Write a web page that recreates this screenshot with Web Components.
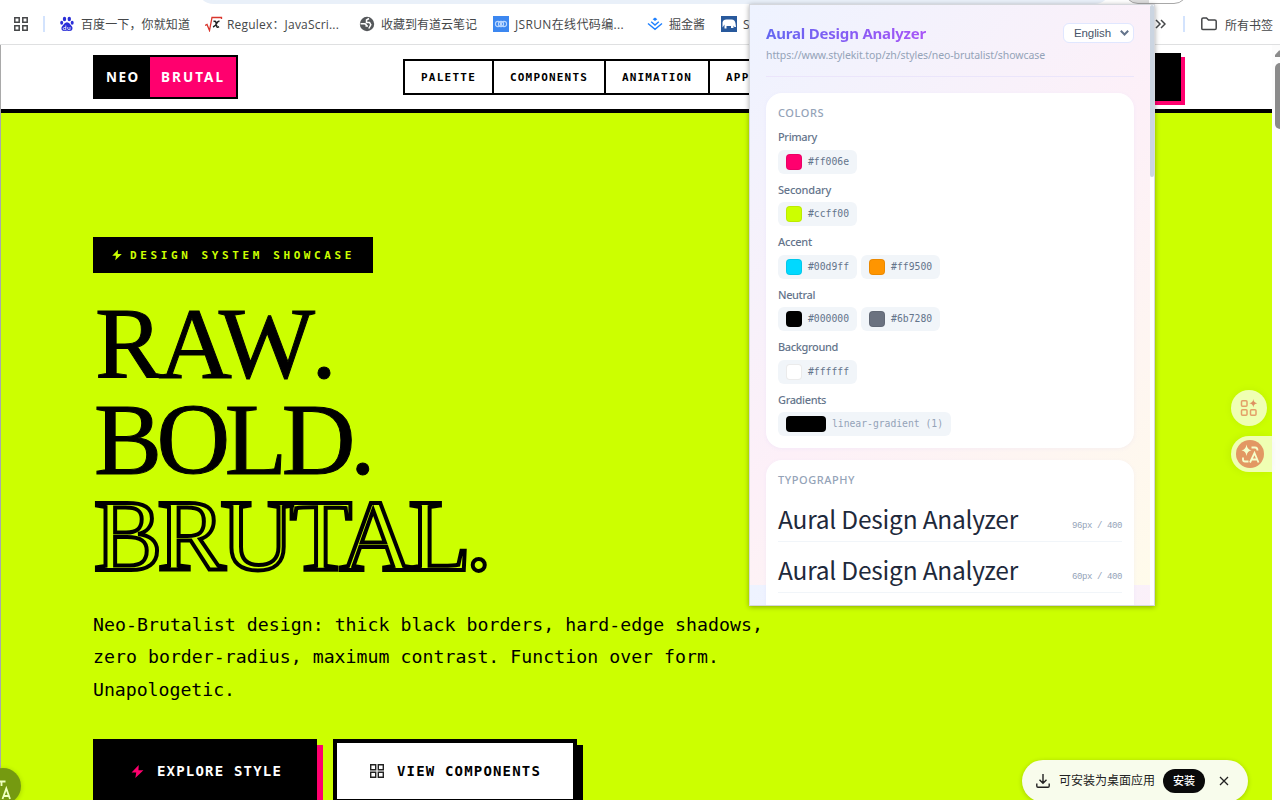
<!DOCTYPE html>
<html lang="zh">
<head>
<meta charset="utf-8">
<title>Neo Brutal</title>
<style>
html,body{margin:0;height:800px;width:1280px;overflow:hidden;background:#fff}
</style>
</head>
<body>
<browser-window></browser-window>
<script>
const make = (tag, html) => customElements.define(tag, class extends HTMLElement {
  constructor() {
    super();
    this.attachShadow({ mode: 'open' }).innerHTML = html;
  }
});

const bolt = 'M14 1.500 2.500 13.500h7.500L8.500 22.500 21.500 10h-8z';

make('browser-window', `
<style>
:host{display:flex;flex-direction:column;position:relative;width:1280px;height:800px;overflow:hidden;background:#fff}
.page{flex:1;display:flex;min-height:0;border-left:1px solid #a9a9a9}
.doc{flex:1;min-width:0;background:#cf0;overflow:hidden}
extension-popup{position:absolute;left:749px;top:4px}
.f1{position:absolute;left:1231px;top:390px}
.f2{position:absolute;left:1231px;top:436px}
.f3{position:absolute;left:-15px;top:768px}
install-toast{position:absolute;left:1022px;top:760px}
</style>
<bookmark-bar></bookmark-bar>
<div class="page"><div class="doc"><site-header></site-header><hero-section></hero-section></div><scroll-rail></scroll-rail></div>
<apps-bubble class="f1"></apps-bubble>
<translate-bubble class="f2"></translate-bubble>
<corner-bubble class="f3"></corner-bubble>
<install-toast></install-toast>
<extension-popup></extension-popup>`);

make('bookmark-bar', `
<style>
:host{display:block;height:44px;border-bottom:1px solid #dfe0e1;background:#fff;position:relative;font:12px "Open Sans","Noto Sans CJK SC",sans-serif;color:#454749;overflow:hidden}
.omni{position:absolute;left:196px;top:-32px;width:916px;height:36px;border-radius:18px;background:#e9f0f9}
.avatar{position:absolute;left:1124px;top:-24px;width:62px;height:26px;border:1px solid #a8a8a8;border-radius:14px;background:linear-gradient(90deg,#ddd 24px,#fff 24px)}
.row{display:flex;height:40px;padding-top:4px;align-items:center;position:relative}
svg{display:block;flex:none}
.sep{width:2px;height:16px;background:#d3e3fd}
bookmark-item{margin-left:var(--m)}
</style>
<div class="omni"></div><div class="avatar"></div>
<div class="row">
<svg style="margin-left:14px" width="14" height="14" fill="none" stroke="#454749" stroke-width="1.5"><path d="M.8.8h4.4v4.4H.8zM8.8.8h4.4v4.4H8.8zM.8 8.8h4.4v4.4H.8zM8.8 8.8h4.4v4.4H8.8z"/></svg>
<span class="sep" style="margin-left:15px"></span>
<bookmark-item style="--m:14px"><svg slot="icon" width="16" height="16" viewBox="0 0 16 16" fill="#2b2fd8"><ellipse cx="5.5" cy="3" rx="1.7" ry="2.3"/><ellipse cx="10.3" cy="3" rx="1.7" ry="2.3"/><ellipse cx="2.7" cy="6.8" rx="1.5" ry="2"/><ellipse cx="13.2" cy="6.8" rx="1.5" ry="2"/><path d="M8 6.3c2.3 0 3 2.3 4.6 3.8 1.8 1.8.8 5-1.6 5-1.300 0-1.700-.3-3-.3s-1.700.3-3 .3c-2.500 0-3.400-3.200-1.600-5C5 8.600 5.700 6.300 8 6.300z"/><path d="M6.800 9.500v4.200H5.300c-1.500 0-1.500-2.200 0-2.200h1.500M8.800 11v2.100c0 .6 2.200.6 2.200.6V11" fill="none" stroke="#fff" stroke-width=".8"/></svg><fit-text w="109">百度一下，你就知道</fit-text></bookmark-item>
<bookmark-item style="--m:15px"><svg slot="icon" width="18" height="16" viewBox="0 0 18 16"><path d="M0 9.500l2-1 2.500 6L7 1.500h9.500v1.500" fill="none" stroke="#d9362d" stroke-width="1.300"/><path d="M8.500 5.500q2-1 2.500 1l.8 4q.4 1.500 2.200.2M14.500 5.500q-1.500-.8-2.800 2T8 11" fill="none" stroke="#222" stroke-width="1.500"/></svg><fit-text w="112" style="margin-left:-2px">Regulex：JavaScri...</fit-text></bookmark-item>
<bookmark-item style="--m:20px"><svg slot="icon" width="16" height="16" viewBox="0 0 16 16"><circle cx="8" cy="8" r="7.200" fill="#55585b"/><path d="M1.500 7.800h4q2 .2 1.800 2.200h1.700M10 2.500 7.500 4v2.500h3l1.300 2.300-2 3.700" fill="none" stroke="#fff" stroke-width="1.500"/></svg><fit-text w="96">收藏到有道云笔记</fit-text></bookmark-item>
<bookmark-item style="--m:16px"><svg slot="icon" width="16" height="16" viewBox="0 0 16 16"><path fill="#3c87f0" d="M0 0h16v16H0z"/><g fill="none" stroke="#b9d6ff" stroke-width="1.100"><circle cx="5" cy="8" r="2.600"/><circle cx="8" cy="8" r="2.600"/><circle cx="11" cy="8" r="2.600"/></g></svg><fit-text w="109">JSRUN在线代码编...</fit-text></bookmark-item>
<bookmark-item style="--m:23px"><svg slot="icon" width="16" height="16" viewBox="0 0 16 16" fill="none" stroke="#1e80ff" stroke-width="1.400"><path d="M1 7.500l7 5.800 7-5.800M4.200 5.800 8 9l3.800-3.200M6.800 3.300 8 4.200l1.200-.9L8 2.400z"/></svg><fit-text w="36">掘金酱</fit-text></bookmark-item>
<bookmark-item style="--m:16px"><svg slot="icon" width="16" height="16" viewBox="0 0 16 16"><path fill="#28599c" d="M0 0h16v16H0z"/><path fill="#fff" d="M1.500 11.500V6.500q.5-3 4-3h5q3.500 0 4 4l.5 3.500h-1.500L12.500 9.500v2.500h-2.500V10h-4.500v2.500H3.500V8.500z"/></svg><span>S</span></bookmark-item>
</div>
<svg style="position:absolute;left:1155px;top:19px" width="11" height="10" fill="none" stroke="#454749" stroke-width="1.500"><path d="M1 1l4 4-4 4M6 1l4 4-4 4"/></svg>
<span class="sep" style="position:absolute;left:1183px;top:16px"></span>
<svg style="position:absolute;left:1201px;top:17px" width="16" height="14" fill="none" stroke="#454749" stroke-width="1.500"><path d="M.8 11.500V2.300Q.8 1 2.200 1H5.500L7.500 3h6.300q1.400 0 1.400 1.300v7q0 1.300-1.400 1.300H2.200Q.8 12.600.8 11.500z"/></svg>
<fit-text w="48" style="position:absolute;left:1225px;top:16px">所有书签</fit-text>`);

make('bookmark-item', `
<style>:host{display:flex;align-items:center;gap:6px;height:20px;line-height:20px;white-space:nowrap}.t{padding-top:1px}</style>
<slot name="icon"></slot><div class="t"><slot></slot></div>`);

make('scroll-rail', `
<style>:host{display:flex;flex-direction:column;width:8px;background:#fcfcfc;overflow:hidden}
svg{display:block;margin:5px 0 6px 3px}.thumb{margin-left:3px;width:10px;height:66px;border-radius:5px;background:#8b8b8b}</style>
<svg width="10" height="7"><path d="M0 7V5L4 .5H6L10 5v2z" fill="#8b8b8b"/></svg><div class="thumb"></div>`);

make('site-header', `
<style>
:host{display:flex;height:64px;border-bottom:4px solid #000;background:#fff;padding:0 91px 0 92px;align-items:center;font:bold 11px "DejaVu Sans Mono",monospace;box-sizing:content-box}
.logo{display:flex;border:2px solid #000;width:141px;height:40px;font:bold 13.500px/40px "Noto Sans",sans-serif;color:#fff}
.logo span{display:block;box-sizing:border-box}
.a{width:55px;background:#000;padding-left:11px}.b{width:86px;background:#ff006e;padding-left:11px}
nav{display:flex;margin-left:165px;border:2px solid #000;height:32px;line-height:33px}
nav span{padding:0 16px;border-right:2px solid #000}
.cta{margin-left:auto;width:60px;height:48px;background:#000;box-shadow:4px 4px #ff006e}
</style>
<div class="logo"><span class="a"><fit-text w="33.500">NEO</fit-text></span><span class="b"><fit-text w="64">BRUTAL</fit-text></span></div>
<nav><span><fit-text w="55">PALETTE</fit-text></span><span><fit-text w="78">COMPONENTS</fit-text></span><span><fit-text w="70">ANIMATION</fit-text></span><span><fit-text w="94">APPLICATIONS</fit-text></span></nav>
<div class="cta"></div>`);

make('hero-section', `
<style>
:host{display:block;padding:124px 0 0 92px;color:#000;font-family:"DejaVu Sans Mono",monospace}
.badge{display:flex;align-items:center;width:280px;height:36px;background:#000;color:#cf0;font-size:11px;font-weight:bold}
.badge svg{margin:0 7px 0 18px}
h1{margin:23px 0 0;font:102px/96px "Liberation Serif",serif;height:288px;-webkit-text-stroke:1px #000}
h1 div{height:96px}
.o{color:transparent;-webkit-text-stroke:4px #000}
p{margin:24.500px 0 0;font-size:18.200px;line-height:32.500px}
p fit-text{display:block}
.btns{display:flex;gap:16px;margin-top:33px;font-size:14px;font-weight:bold}
.btn{box-sizing:border-box;height:64px;border:4px solid #000;display:flex;align-items:center}
.x{width:224px;background:#000;color:#fff;box-shadow:6px 6px #ff006e}.v{width:244px;background:#fff;box-shadow:6px 6px #000}
svg{display:block;flex:none}
</style>
<div class="badge"><svg width="12" height="12" viewBox="0 0 24 24" fill="#cf0"><path d="${bolt}"/></svg><fit-text w="225">DESIGN SYSTEM SHOWCASE</fit-text></div>
<h1><div><fit-text w="237" style="margin-left:2px">RAW<span style="margin-left:1px">.</span></fit-text></div><div><fit-text w="276" style="margin-left:1px">BOLD.</fit-text></div><div class="o"><fit-text w="393" style="margin-left:1px">BRUTAL.</fit-text></div></h1>
<p><fit-text w="670">Neo-Brutalist design: thick black borders, hard-edge shadows,</fit-text><fit-text w="626">zero border-radius, maximum contrast. Function over form.</fit-text><fit-text w="142">Unapologetic.</fit-text></p>
<div class="btns"><div class="btn x"><svg style="margin:0 12px 0 33px" width="15" height="15" viewBox="0 0 24 24" fill="#ff006e"><path d="${bolt}"/></svg><fit-text w="125">EXPLORE STYLE</fit-text></div>
<div class="btn v"><svg style="margin:0 13px 0 33px" width="14" height="14" fill="none" stroke="#222" stroke-width="1.400"><path d="M.7.7h5v5h-5zM8.300.7h5v5h-5zM.7 8.300h5v5h-5zM8.300 8.300h5v5h-5z"/></svg><fit-text w="144">VIEW COMPONENTS</fit-text></div></div>`);

make('apps-bubble', `
<style>:host{display:grid;place-items:center;width:36px;height:36px;border-radius:50%;background:#efffb3;box-shadow:0 0 8px #0000000f}</style>
<svg width="18" height="18" viewBox="0 0 18 18" fill="none" stroke="#e3a068" stroke-width="1.500"><rect x="1.500" y="1.700" width="5.500" height="5.500" rx="1"/><rect x="1.500" y="10.700" width="5.500" height="5.500" rx="1"/><rect x="10.500" y="10.700" width="5.500" height="5.500" rx="1"/><path d="M13.300 0q.4 3.800 4 4.300-3.600.5-4 4.300-.4-3.800-4-4.300 3.600-.5 4-4.300z" fill="#de9060" stroke="none"/></svg>`);

make('translate-bubble', `
<style>:host{display:flex;align-items:center;width:41px;height:36px;border-radius:18px 0 0 18px;background:#efffb3;box-shadow:-2px 0 8px #0000000f}svg{margin-left:5px}</style>
<svg width="28" height="28" viewBox="0 0 28 28"><circle cx="14" cy="14" r="14" fill="#e29863"/><path d="M10.500 4.500q.7 5 5 5.800-4.300.8-5 5.800-.7-5-5-5.800 4.300-.8 5-5.800z" fill="#f5ffcb"/><g fill="none" stroke="#f5ffcb" stroke-width="1.800"><path d="M15.500 7.500h3.500q2.500 0 2.500 3M7 17.500v2q0 2 2 2h3.500M14 22.500l4.500-9.500 4 9.500M15.500 19.500h6"/></g></svg>`);

make('corner-bubble', `
<style>:host{display:block;width:36px;height:36px;border-radius:50%;background:#759a10;box-shadow:0 1px 5px #0003}svg{display:block}</style>
<svg width="36" height="36" fill="none" stroke="#efffc0" stroke-width="1.800"><path d="M15 13.500h5.500M16.500 13.500v4.500M17.500 31l3.800-10.500L25 31M18.500 28h5.500"/></svg>`);

make('install-toast', `
<style>:host{display:flex;box-sizing:border-box;align-items:center;width:226px;height:42px;padding-left:14px;border-radius:21px;background:#f8fcec;color:#222;font:12px/16px "Noto Sans CJK SC",sans-serif;box-shadow:0 1px 5px #0003}
b{display:block;margin-left:8px;width:42px;height:24px;line-height:23px;border-radius:12px;background:#0a0a0a;color:#fff;font-size:11px;text-align:center;font-weight:500}</style>
<svg width="14" height="14" fill="none" stroke="#222" stroke-width="1.400" style="margin-right:9px"><path d="M7 0v9M3.500 5.800 7 9.300l3.500-3.500M.8 9.500v2.500q0 1.200 1.200 1.200h10q1.200 0 1.200-1.200V9.500"/></svg><fit-text w="96" style="margin-top:-2px">可安装为桌面应用</fit-text><b>安装</b>
<svg width="10" height="10" fill="none" stroke="#222" stroke-width="1.300" style="margin-left:14px"><path d="M1 1l8 8M9 1 1 9"/></svg>`);

make('extension-popup', `
<style>
:host{display:flex;box-sizing:border-box;width:406px;height:602px;border:1px solid #d5d7dc;background:#fff;box-shadow:0 1px 5px #0005;overflow:hidden;font-family:"Noto Sans",sans-serif}
.body{width:368px;height:600px;padding:0 16px;background:linear-gradient(135deg,#eef3ff 0%,#fdf0f8 50%,#fffbeb 100%) 0 0/400px 580px}
.bar{width:4px;height:172px;border-radius:2px;background:#cbd5e1}
header{height:71px;border-bottom:1px solid #ebe5fb;margin-bottom:16px}
.top{display:flex;justify-content:space-between;padding-top:18px;height:22px}
h2{margin:0;font:700 15px/21px "Noto Sans",sans-serif;background:linear-gradient(90deg,#6366f1,#a855f7);-webkit-background-clip:text;background-clip:text;color:transparent;width:160px}
.sel{display:flex;box-sizing:border-box;width:71px;height:20px;border:1px solid #e0e7ff;border-radius:6px;background:#fff;font:11.500px/18px "Liberation Sans",sans-serif;color:#475569;padding-left:10px;align-items:center}
.url{font-size:10.500px;line-height:15px;color:#94a3b8;margin-top:3px}
.stack{display:flex;flex-direction:column;gap:12px}
.tall{height:200px}
</style>
<div class="body"><header><div class="top"><h2><fit-text w="160">Aural Design Analyzer</fit-text></h2><div class="sel"><fit-text w="37">English</fit-text><svg width="9" height="6" style="margin-left:9px" fill="none" stroke="#64748b" stroke-width="2"><path d="M.8.800 4.500 4.500 8.200.8"/></svg></div></div>
<div class="url"><fit-text w="279">https://www.stylekit.top/zh/styles/neo-brutalist/showcase</fit-text></div></header>
<div class="stack">
<panel-card><fit-text slot="title" w="46">COLORS</fit-text>
<color-group><fit-text slot="label" w="39">Primary</fit-text><color-chip style="--c:#ff006e">#ff006e</color-chip></color-group>
<color-group><fit-text slot="label" w="53">Secondary</fit-text><color-chip style="--c:#cf0">#ccff00</color-chip></color-group>
<color-group><fit-text slot="label" w="34">Accent</fit-text><color-chip style="--c:#00d9ff">#00d9ff</color-chip><color-chip style="--c:#ff9500">#ff9500</color-chip></color-group>
<color-group><fit-text slot="label" w="37">Neutral</fit-text><color-chip style="--c:#000">#000000</color-chip><color-chip style="--c:#6b7280">#6b7280</color-chip></color-group>
<color-group><fit-text slot="label" w="60">Background</fit-text><color-chip style="--c:#fff">#ffffff</color-chip></color-group>
<color-group style="margin-bottom:0"><fit-text slot="label" w="48">Gradients</fit-text><color-chip style="--c:#000;--w:40px;--t:#94a3b8"><fit-text w="111">linear-gradient (1)</fit-text></color-chip></color-group>
</panel-card>
<panel-card class="tall"><fit-text slot="title" w="77">TYPOGRAPHY</fit-text>
<type-row><fit-text w="240">Aural Design Analyzer</fit-text><fit-text slot="meta" w="50">96px / 400</fit-text></type-row>
<type-row><fit-text w="240">Aural Design Analyzer</fit-text><fit-text slot="meta" w="50">60px / 400</fit-text></type-row>
</panel-card></div></div><div class="bar"></div>`);

make('panel-card', `
<style>:host{display:block;padding:12px;border-radius:16px;background:#fff;box-shadow:0 1px 4px #6366f10f}
.t{font:500 11px/16px "Noto Sans",sans-serif;color:#94a3b8;margin-bottom:7.750px;height:16.500px}</style>
<div class="t"><slot name="title"></slot></div><slot></slot>`);

make('color-group', `
<style>:host{display:block;margin-bottom:8px}.l{font-size:11px;font-weight:500;line-height:15.500px;height:16.500px;color:#64748b;margin-bottom:4px}.r{display:flex;gap:4px}</style>
<div class="l"><slot name="label"></slot></div><div class="r"><slot></slot></div>`);

make('color-chip', `
<style>:host{display:flex;align-items:center;gap:6px;height:24px;padding:0 8px;border-radius:6px;background:#f1f5f9;font:9.750px/24px "DejaVu Sans Mono",monospace;color:var(--t,#64748b);white-space:nowrap}
i{box-sizing:border-box;width:var(--w,16px);height:16px;border-radius:4px;background:var(--c);border:1px solid #00000014}</style>
<i></i><slot></slot>`);

make('type-row', `
<style>:host{display:flex;box-sizing:border-box;height:51px;border-bottom:1px solid #f1f5f9;justify-content:space-between;color:#1e293b;font:24.500px/55px "Noto Sans CJK SC",sans-serif;position:relative;top:-6px}
.m{font:9px/71px "Liberation Mono",monospace;color:#94a3b8}</style>
<slot></slot><span class="m"><slot name="meta"></slot></span>`);

/* Spreads its text over the width given in "w" by adjusting the tracking. */
customElements.define('fit-text', class extends HTMLElement {
  connectedCallback() {
    if (this.shadowRoot) return;
    this.attachShadow({ mode: 'open' }).innerHTML = '<style>:host{display:block;white-space:nowrap}span{display:inline-block}</style><span><slot></slot></span>';
    const box = this.shadowRoot.querySelector('span');
    const natural = box.getBoundingClientRect().width;
    this.style.letterSpacing = ((+this.getAttribute('w') - natural) / [...this.textContent].length) + 'px';
  }
});
</script>
</body>
</html>
